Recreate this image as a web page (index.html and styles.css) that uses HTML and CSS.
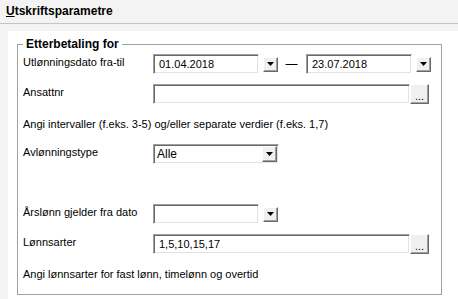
FILE: index.html
```html
<!DOCTYPE html>
<html lang="no">
<head>
    <meta charset="UTF-8">
    <title>Utskriftsparametre</title>
    <link rel="stylesheet" href="styles.css">
</head>
<body>
    <div class="header">
        <h1><u>U</u>tskriftsparametre</h1>
    </div>

    <div class="panel">
        <fieldset class="group">
            <legend>Etterbetaling for</legend>
            <div class="rows">
                <label>Utlønningsdato fra-til</label>
                <div class="field">
                    <input class="text date" type="text" value="01.04.2018">
                    <span class="btn drop"><svg width="7" height="4" viewBox="0 0 7 4"><path d="M0 0h7L3.5 4z"/></svg></span>
                    <span class="dash">—</span>
                    <input class="text date" type="text" value="23.07.2018">
                    <span class="btn drop"><svg width="7" height="4" viewBox="0 0 7 4"><path d="M0 0h7L3.5 4z"/></svg></span>
                </div>

                <label>Ansattnr</label>
                <div class="field">
                    <input class="text wide" type="text" value="">
                    <span class="btn more">...</span>
                </div>

                <p class="hint">Angi intervaller (f.eks. 3-5) og/eller separate verdier (f.eks. 1,7)</p>

                <label>Avlønningstype</label>
                <div class="field">
                    <div class="combo">
                        <span class="combo-value">Alle</span>
                        <span class="btn drop"><svg width="7" height="4" viewBox="0 0 7 4"><path d="M0 0h7L3.5 4z"/></svg></span>
                    </div>
                </div>

                <div class="spacer"></div>

                <label>Årslønn gjelder fra dato</label>
                <div class="field">
                    <input class="text date" type="text" value="">
                    <span class="btn drop"><svg width="7" height="4" viewBox="0 0 7 4"><path d="M0 0h7L3.5 4z"/></svg></span>
                </div>

                <label>Lønnsarter</label>
                <div class="field">
                    <input class="text wide" type="text" value="1,5,10,15,17">
                    <span class="btn more">...</span>
                </div>

                <p class="hint">Angi lønnsarter for fast lønn, timelønn og overtid</p>
            </div>
        </fieldset>
    </div>
</body>
</html>
```

FILE: styles.css
```css
body {
    margin: 0;
    background-color: #f3f3f3;
    font-family: 'Liberation Sans', Arial, sans-serif;
    font-size: 11px;
    color: #000;
}

.header {
    height: 23px;
    border-bottom: 1px solid #c4c4c4;
}

.header h1 {
    margin: 0;
    padding: 4px 0 0 6px;
    font-size: 12px;
    font-weight: bold;
    line-height: 14px;
}

.header u {
    text-decoration-thickness: 1px;
}

.panel {
    margin: 7px 0 0 8px;
    padding: 6px 16px 10px 9px;
    background-color: #fff;
    height: 252px;
}

.group {
    margin: 0;
    padding: 3px 5px 10px 5px;
    border: 1px solid #a0a0a0;
}

.group legend {
    padding: 0 3px;
    font-size: 12px;
    font-weight: bold;
    line-height: 14px;
}

.rows {
    display: grid;
    grid-template-columns: 130px auto;
    grid-auto-rows: 20px;
    row-gap: 10px;
    align-items: center;
}

label {
    align-self: start;
    padding-top: 2px;
}

.hint,
.spacer {
    grid-column: 1 / 3;
    margin: 0;
}

.field {
    display: flex;
    align-items: center;
    height: 20px;
}

.text {
    box-sizing: border-box;
    height: 20px;
    margin: 0;
    padding: 0 5px;
    font-family: inherit;
    font-size: 11px;
    border: 1px solid;
    border-color: #a0a0a0 #fff #fff #a0a0a0;
    box-shadow: inset 1px 1px #696969, inset -1px -1px #e3e3e3;
    outline: none;
}

.date {
    width: 106px;
}

.wide {
    width: 257px;
}

.btn {
    box-sizing: border-box;
    display: flex;
    align-items: center;
    justify-content: center;
    background-color: #f0f0f0;
    border: 1px solid;
    border-color: #fff #696969 #696969 #fff;
    box-shadow: inset -1px -1px #a0a0a0;
}

.drop {
    width: 15px;
    height: 15px;
    margin-left: 4px;
}

.drop svg {
    display: block;
    margin-bottom: 1px;
}

.more {
    width: 19px;
    height: 20px;
    margin-left: 0;
    align-items: flex-end;
    padding-bottom: 3px;
    line-height: 8px;
}

.dash {
    width: 27px;
    padding-right: 1px;
    text-align: center;
    font-size: 12px;
}

.combo {
    box-sizing: border-box;
    display: flex;
    align-items: center;
    justify-content: space-between;
    width: 126px;
    height: 20px;
    padding: 0 1px 0 3px;
    border: 1px solid;
    border-color: #a0a0a0 #fff #fff #a0a0a0;
    box-shadow: inset 1px 1px #696969, inset -1px -1px #e3e3e3;
    font-size: 12px;
}

.combo .drop {
    margin-left: 0;
    height: 16px;
}
```
